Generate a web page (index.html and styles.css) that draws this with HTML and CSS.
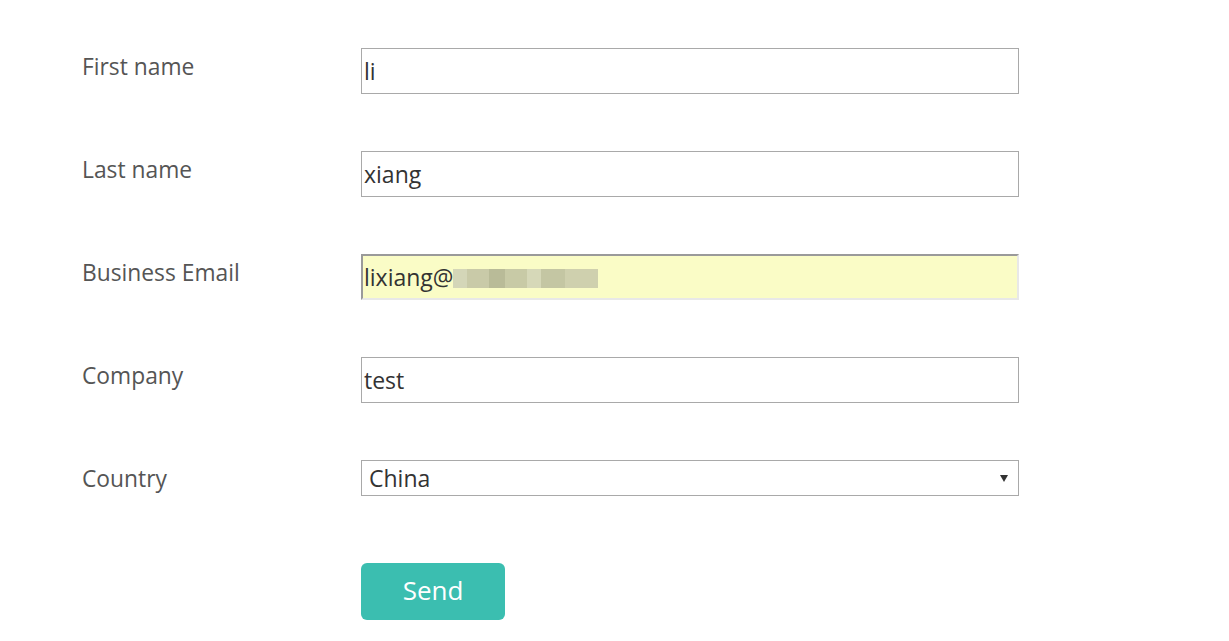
FILE: index.html
```html
<!DOCTYPE html>
<html>
<head>
<meta charset="utf-8">
<link rel="stylesheet" href="styles.css">
</head>
<body>
<form class="form">
  <div class="row">
    <label class="label">First name</label>
    <div class="field">li</div>
  </div>
  <div class="row">
    <label class="label">Last name</label>
    <div class="field">xiang</div>
  </div>
  <div class="row">
    <label class="label">Business Email</label>
    <div class="field field-auto">lixiang@<span class="blur"><span class="b1"></span><span class="b2"></span><span class="b3"></span><span class="b4"></span><span class="b5"></span><span class="b6"></span><span class="b7"></span></span></div>
  </div>
  <div class="row">
    <label class="label">Company</label>
    <div class="field">test</div>
  </div>
  <div class="row">
    <label class="label">Country</label>
    <div class="select"><span>China</span><span class="arrow"></span></div>
  </div>
  <div class="row">
    <span></span>
    <div><button type="button" class="send">Send</button></div>
  </div>
</form>
</body>
</html>
```
FILE: styles.css
```css
html, body {
  margin: 0;
  background: #fff;
}
body {
  font-family: "Open Sans", "Liberation Sans", sans-serif;
}
.form {
  padding: 48px 0 0 82px;
}
.row {
  display: grid;
  grid-template-columns: 279px 658px;
  height: 103px;
  align-items: start;
}
.label {
  font-size: 22.8px;
  color: #555;
  line-height: 28px;
  padding-top: 5px;
}
.field {
  box-sizing: border-box;
  height: 46px;
  border: 1px solid #a9a9a9;
  font-size: 23px;
  color: #333;
  line-height: 44px;
  padding-left: 2px;
  display: flex;
  align-items: center;
}
.field-auto {
  background: #fafcc6;
  border-top: 2px solid #9a9a9a;
  border-left: 2px solid #9a9a9a;
  border-right: 2px solid #e8e8e8;
  border-bottom: 2px solid #e8e8e8;
  padding-left: 1px;
}
.blur {
  display: inline-flex;
  height: 19px;
  margin-top: 3px;
}
.blur span { display: block; height: 19px; }
.b1 { width: 14px; background: #d4d6b8; }
.b2 { width: 22px; background: #c9caa8; }
.b3 { width: 16px; background: #b9bb98; }
.b4 { width: 22px; background: #c8caa6; }
.b5 { width: 14px; background: #d6d8b8; }
.b6 { width: 24px; background: #c4c6a3; }
.b7 { width: 33px; background: #cfd0ae; }
.select {
  box-sizing: border-box;
  height: 36px;
  border: 1px solid #a9a9a9;
  font-size: 23px;
  color: #333;
  display: flex;
  align-items: center;
  justify-content: space-between;
  padding: 0 10px 0 7px;
}
.arrow {
  width: 0;
  height: 0;
  border-left: 4px solid transparent;
  border-right: 4px solid transparent;
  border-top: 7px solid #333;
}
.send {
  width: 144px;
  height: 57px;
  border: 0;
  border-radius: 6px;
  background: #3bbeb0;
  color: #fff;
  font-family: "Open Sans", "Liberation Sans", sans-serif;
  font-size: 26px;
  padding: 0 0 4px 0;
}
```
